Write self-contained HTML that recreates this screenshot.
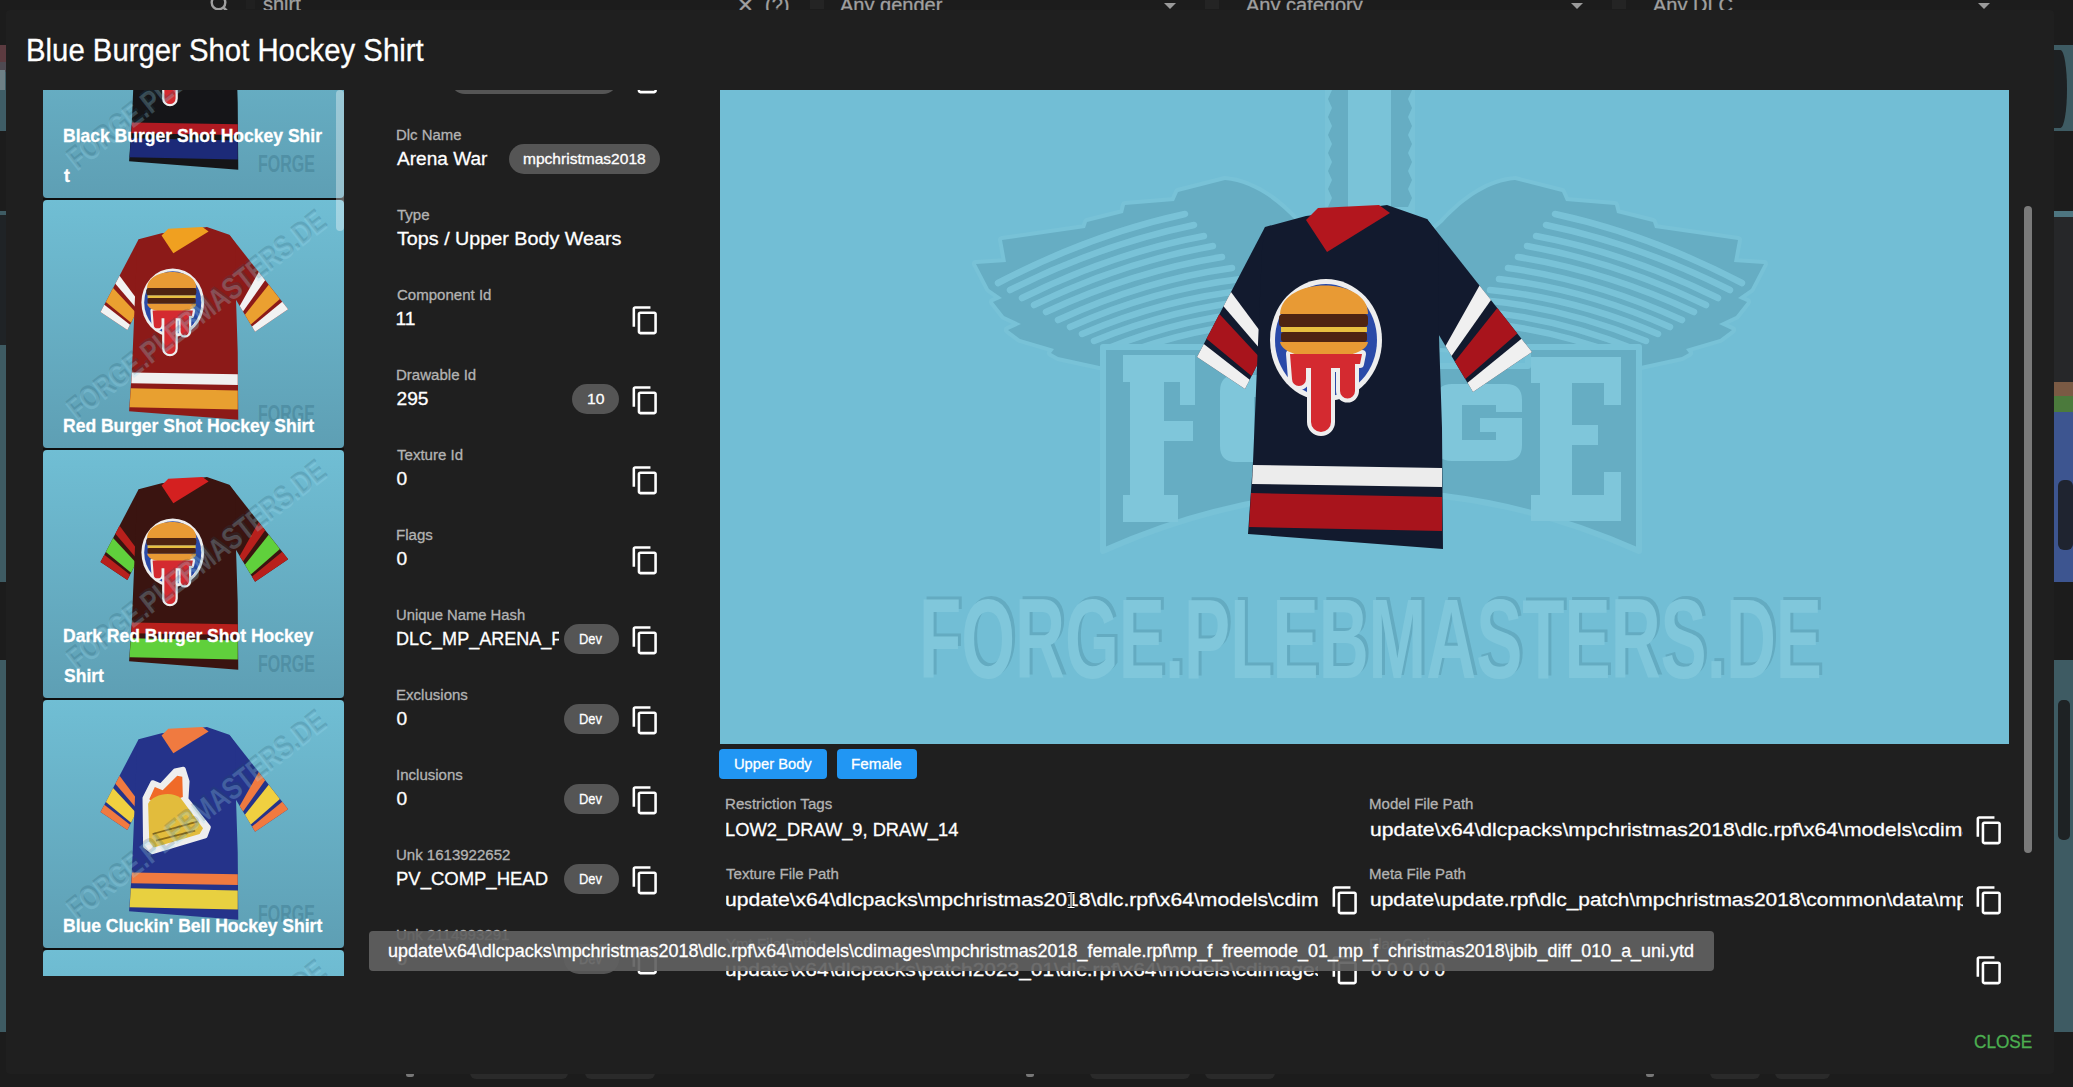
<!DOCTYPE html><html><head><meta charset="utf-8"><style>
*{margin:0;padding:0;box-sizing:border-box}
html,body{width:2073px;height:1087px;overflow:hidden;background:#1c1c1c;font-family:"Liberation Sans",sans-serif}
.t{position:absolute;line-height:1;white-space:nowrap;-webkit-text-stroke:0.3px currentColor}
.r{position:absolute}
.chip{position:absolute;text-align:center;white-space:nowrap}
.clip{position:absolute;overflow:hidden}
</style></head><body>
<div class="clip" style="left:0;top:0;width:2073px;height:1087px"><div class="r" style="left:0px;top:45px;width:6px;height:17px;background:#5c3b40;border-radius:0px;"></div>
<div class="r" style="left:0px;top:62px;width:6px;height:10px;background:#4e4a52;border-radius:0px;"></div>
<div class="r" style="left:0px;top:72px;width:6px;height:59px;background:#3f5d66;border-radius:0px;"></div>
<div class="r" style="left:0px;top:211px;width:6px;height:371px;background:#3e5b63;border-radius:0px;"></div>
<div class="r" style="left:0px;top:660px;width:6px;height:372px;background:#3e5b63;border-radius:0px;"></div>
<div class="r" style="left:0px;top:215px;width:6px;height:130px;background:#1f2326;border-radius:0px;"></div>
<div class="r" style="left:0px;top:70px;width:5px;height:20px;background:#6e8086;border-radius:0px;"></div>
<div class="r" style="left:2054px;top:45px;width:19px;height:86px;background:#3e5b63;border-radius:0px;"></div>
<div class="r" style="left:2054px;top:211px;width:19px;height:6px;background:#4d7580;border-radius:0px;"></div>
<div class="r" style="left:2054px;top:217px;width:19px;height:165px;background:#262729;border-radius:0px;"></div>
<div class="r" style="left:2054px;top:382px;width:19px;height:14px;background:#7a5a44;border-radius:0px;"></div>
<div class="r" style="left:2054px;top:396px;width:19px;height:16px;background:#4b7a3c;border-radius:0px;"></div>
<div class="r" style="left:2054px;top:412px;width:19px;height:170px;background:#3d5590;border-radius:0px;"></div>
<div class="r" style="left:2054px;top:660px;width:19px;height:372px;background:#3e5b63;border-radius:0px;"></div>
<div class="r" style="left:2054px;top:50px;width:13px;height:78px;background:#1d2022;border-radius:0px;border-radius:0 50% 50% 0/0 50% 50% 0"></div>
<div class="r" style="left:2058px;top:480px;width:15px;height:70px;background:#1f2430;border-radius:6px;"></div>
<div class="r" style="left:2058px;top:700px;width:12px;height:140px;background:#1e2224;border-radius:5px;"></div>
<div class="r" style="left:470px;top:1066px;width:98px;height:13px;background:#2a2a2a;border-radius:6px;"></div>
<div class="r" style="left:585px;top:1066px;width:70px;height:13px;background:#2a2a2a;border-radius:6px;"></div>
<div class="r" style="left:1090px;top:1066px;width:100px;height:13px;background:#2a2a2a;border-radius:6px;"></div>
<div class="r" style="left:1205px;top:1066px;width:70px;height:13px;background:#2a2a2a;border-radius:6px;"></div>
<div class="r" style="left:1710px;top:1066px;width:50px;height:13px;background:#2a2a2a;border-radius:6px;"></div>
<div class="r" style="left:1775px;top:1066px;width:55px;height:13px;background:#2a2a2a;border-radius:6px;"></div>
<div class="r" style="left:406px;top:1072px;width:8px;height:5px;background:#777;border-radius:3px;"></div>
<div class="r" style="left:1026px;top:1072px;width:8px;height:5px;background:#777;border-radius:3px;"></div>
<div class="r" style="left:1646px;top:1072px;width:8px;height:5px;background:#777;border-radius:3px;"></div>
<div class="r" style="left:810px;top:0px;width:14px;height:9px;background:#242424;border-radius:0px;"></div>
<div class="r" style="left:1205px;top:0px;width:14px;height:9px;background:#242424;border-radius:0px;"></div>
<div class="r" style="left:1612px;top:0px;width:14px;height:9px;background:#242424;border-radius:0px;"></div>
<div class="r" style="left:246px;top:0px;width:9px;height:9px;background:#202020;border-radius:0px;"></div>
<div class="clip" style="left:0;top:0;width:2073px;height:10px"><div class="t " style="left:263.00px;top:-5.93px;font-size:20px;color:#a0a0a0;">shirt</div>
<svg class="r" style="left:205px;top:-8px" width="30" height="30" viewBox="0 0 30 30"><circle cx="13.5" cy="10.5" r="6.8" stroke="#a0a0a0" stroke-width="2.4" fill="none"/><path d="M18.5,15.5 L24,21" stroke="#a0a0a0" stroke-width="2.6"/></svg><div class="t " style="left:737.00px;top:-4.93px;font-size:20px;color:#a0a0a0;">✕</div>
<div class="t " style="left:765.00px;top:-4.93px;font-size:20px;color:#a0a0a0;">(?)</div>
<div class="t " style="left:840.00px;top:-4.93px;font-size:20px;color:#a0a0a0;">Any gender</div>
<div class="t " style="left:1246.00px;top:-4.93px;font-size:20px;color:#a0a0a0;">Any category</div>
<div class="t " style="left:1653.00px;top:-4.93px;font-size:20px;color:#a0a0a0;">Any DLC</div>
<div class="r" style="left:1164px;top:3px;width:0;height:0;border-left:6px solid transparent;border-right:6px solid transparent;border-top:6px solid #9a9a9a"></div><div class="r" style="left:1571px;top:3px;width:0;height:0;border-left:6px solid transparent;border-right:6px solid transparent;border-top:6px solid #9a9a9a"></div><div class="r" style="left:1978px;top:3px;width:0;height:0;border-left:6px solid transparent;border-right:6px solid transparent;border-top:6px solid #9a9a9a"></div></div></div>
<div class="r" style="left:6px;top:10px;width:2048px;height:1064px;background:#1f1f1f;border-radius:4px;"></div>
<div class="t " style="left:26.08px;top:35.08px;font-size:30.5px;color:#fff;transform:scaleX(0.9613);transform-origin:0 0;">Blue Burger Shot Hockey Shirt</div>
<div class="clip" style="left:43px;top:90px;width:301px;height:886px"><div class="r" style="left:0px;top:107.5px;width:301px;height:2.5px;background:#0e0e0e;border-radius:0px;"></div>
<div class="r" style="left:0px;top:357.5px;width:301px;height:2.5px;background:#0e0e0e;border-radius:0px;"></div>
<div class="r" style="left:0px;top:607.5px;width:301px;height:2.5px;background:#0e0e0e;border-radius:0px;"></div>
<div class="r" style="left:0px;top:857.5px;width:301px;height:2.5px;background:#0e0e0e;border-radius:0px;"></div>
<div class="r" style="left:0;top:-140px;width:301px;height:247.5px;border-radius:4px;overflow:hidden;background:linear-gradient(#70bed4,#5e9fb4)"><svg class="r" style="left:0;top:0;width:301px;height:247px" viewBox="0 0 301 247"><g transform="translate(-612.8,-87.8) scale(0.56)"><path fill="#151518" d="M1265.0,227.0 L1197.0,357.0 L1245.0,389.0 L1292.0,296.0 Z"/><path fill="#151518" d="M1427.0,219.0 L1532.0,352.0 L1473.0,392.0 L1418.0,300.0 Z"/><path fill="#eee" d="M1231.0,292.0 L1223.5,306.3 L1263.3,352.7 L1268.5,342.5 Z"/><path fill="#a81820" d="M1219.4,314.1 L1206.5,338.8 L1251.6,376.0 L1260.5,358.3 Z"/><path fill="#eee" d="M1203.8,344.0 L1197.0,357.0 L1245.0,389.0 L1249.7,379.7 Z"/><path fill="#eee" d="M1479.5,285.5 L1491.0,300.1 L1451.5,356.1 L1445.5,346.0 Z"/><path fill="#a81820" d="M1497.3,308.1 L1517.3,333.4 L1465.3,379.1 L1454.8,361.6 Z"/><path fill="#eee" d="M1521.5,338.7 L1532.0,352.0 L1473.0,392.0 L1467.5,382.8 Z"/><path fill="#151518" d="M1306,216 L1387,205 L1427,219 L1438,234 L1439,336 L1442,428 L1443,549 L1248,534 L1253,462 L1257,367 L1262,250 L1265,227 Z"/><path fill="#c0202a" d="M1306,220 L1318,208 L1379,205 L1390,213 L1327,252 Z"/><path fill="#b01a22" d="M1253,465 L1442,468 L1442,487 L1252,484 Z"/><path fill="#1c2a78" d="M1251,493 L1442,497 L1442,531 L1249,527 Z"/><ellipse cx="1326" cy="340" rx="56" ry="61" fill="#eeeeee"/><ellipse cx="1326" cy="340" rx="51" ry="56" fill="#2a4aa8"/><path d="M1290,354 L1362,354 L1360,364 L1355,364 L1355,391 a7.5,7.5 0 0 1 -15,0 L1340,368 L1331,368 L1331,422 a10,10 0 0 1 -20,0 L1311,368 L1306,368 L1306,379 a7,7 0 0 1 -14,0 Z" fill="#eeeeee" stroke="#eeeeee" stroke-width="8" stroke-linejoin="round"/><path fill="#e89a34" d="M1280,314 C1282,276 1368,276 1368,314 Z"/><rect x="1279" y="314" width="89" height="13" rx="4" fill="#4e2412"/><rect x="1281" y="327" width="86" height="5" fill="#e8c040"/><rect x="1281" y="332" width="86" height="10" rx="3" fill="#4e2412"/><path fill="#e89a34" d="M1280,342 L1368,342 C1366,362 1284,364 1280,342 Z"/><path d="M1290,354 L1362,354 L1360,364 L1355,364 L1355,391 a7.5,7.5 0 0 1 -15,0 L1340,368 L1331,368 L1331,422 a10,10 0 0 1 -20,0 L1311,368 L1306,368 L1306,379 a7,7 0 0 1 -14,0 Z" fill="#d42a30"/></g><g transform="translate(34,222) rotate(-37.8)"><text x="2" y="-2" font-family="Liberation Sans" font-weight="bold" font-size="31" textLength="318" lengthAdjust="spacingAndGlyphs" fill="rgba(30,80,100,0.2)">FORGE.PLEBMASTERS.DE</text><text x="0" y="0" font-family="Liberation Sans" font-weight="bold" font-size="31" textLength="318" lengthAdjust="spacingAndGlyphs" fill="rgba(160,220,240,0.25)">FORGE.PLEBMASTERS.DE</text></g><text x="215" y="222" font-family="Liberation Sans" font-weight="bold" font-size="24" textLength="57" lengthAdjust="spacingAndGlyphs" fill="rgba(40,95,115,0.3)">FORGE</text></svg></div>
<div class="t " style="left:19.65px;top:37.32px;font-size:18.4px;color:#fff;transform:scaleX(0.9527);transform-origin:0 0;font-weight:bold;">Black Burger Shot Hockey Shir</div>
<div class="t " style="left:20.60px;top:77.32px;font-size:18.4px;color:#fff;transform:scaleX(0.9527);transform-origin:0 0;font-weight:bold;">t</div>
<div class="r" style="left:0;top:110px;width:301px;height:247.5px;border-radius:4px;overflow:hidden;background:linear-gradient(#70bed4,#5e9fb4)"><svg class="r" style="left:0;top:0;width:301px;height:247px" viewBox="0 0 301 247"><g transform="translate(-612.8,-87.8) scale(0.56)"><path fill="#8c1a18" d="M1265.0,227.0 L1197.0,357.0 L1245.0,389.0 L1292.0,296.0 Z"/><path fill="#8c1a18" d="M1427.0,219.0 L1532.0,352.0 L1473.0,392.0 L1418.0,300.0 Z"/><path fill="#f2f2f2" d="M1231.0,292.0 L1223.5,306.3 L1263.3,352.7 L1268.5,342.5 Z"/><path fill="#eba030" d="M1219.4,314.1 L1206.5,338.8 L1251.6,376.0 L1260.5,358.3 Z"/><path fill="#f2f2f2" d="M1203.8,344.0 L1197.0,357.0 L1245.0,389.0 L1249.7,379.7 Z"/><path fill="#f2f2f2" d="M1479.5,285.5 L1491.0,300.1 L1451.5,356.1 L1445.5,346.0 Z"/><path fill="#eba030" d="M1497.3,308.1 L1517.3,333.4 L1465.3,379.1 L1454.8,361.6 Z"/><path fill="#f2f2f2" d="M1521.5,338.7 L1532.0,352.0 L1473.0,392.0 L1467.5,382.8 Z"/><path fill="#8c1a18" d="M1306,216 L1387,205 L1427,219 L1438,234 L1439,336 L1442,428 L1443,549 L1248,534 L1253,462 L1257,367 L1262,250 L1265,227 Z"/><path fill="#f0a020" d="M1306,220 L1318,208 L1379,205 L1390,213 L1327,252 Z"/><path fill="#f0f0f0" d="M1253,465 L1442,468 L1442,487 L1252,484 Z"/><path fill="#e8a030" d="M1251,493 L1442,497 L1442,531 L1249,527 Z"/><ellipse cx="1326" cy="340" rx="56" ry="61" fill="#eeeeee"/><ellipse cx="1326" cy="340" rx="51" ry="56" fill="#2a4aa8"/><path d="M1290,354 L1362,354 L1360,364 L1355,364 L1355,391 a7.5,7.5 0 0 1 -15,0 L1340,368 L1331,368 L1331,422 a10,10 0 0 1 -20,0 L1311,368 L1306,368 L1306,379 a7,7 0 0 1 -14,0 Z" fill="#eeeeee" stroke="#eeeeee" stroke-width="8" stroke-linejoin="round"/><path fill="#e89a34" d="M1280,314 C1282,276 1368,276 1368,314 Z"/><rect x="1279" y="314" width="89" height="13" rx="4" fill="#4e2412"/><rect x="1281" y="327" width="86" height="5" fill="#e8c040"/><rect x="1281" y="332" width="86" height="10" rx="3" fill="#4e2412"/><path fill="#e89a34" d="M1280,342 L1368,342 C1366,362 1284,364 1280,342 Z"/><path d="M1290,354 L1362,354 L1360,364 L1355,364 L1355,391 a7.5,7.5 0 0 1 -15,0 L1340,368 L1331,368 L1331,422 a10,10 0 0 1 -20,0 L1311,368 L1306,368 L1306,379 a7,7 0 0 1 -14,0 Z" fill="#d42a30"/></g><g transform="translate(34,222) rotate(-37.8)"><text x="2" y="-2" font-family="Liberation Sans" font-weight="bold" font-size="31" textLength="318" lengthAdjust="spacingAndGlyphs" fill="rgba(30,80,100,0.2)">FORGE.PLEBMASTERS.DE</text><text x="0" y="0" font-family="Liberation Sans" font-weight="bold" font-size="31" textLength="318" lengthAdjust="spacingAndGlyphs" fill="rgba(160,220,240,0.25)">FORGE.PLEBMASTERS.DE</text></g><text x="215" y="222" font-family="Liberation Sans" font-weight="bold" font-size="24" textLength="57" lengthAdjust="spacingAndGlyphs" fill="rgba(40,95,115,0.3)">FORGE</text></svg></div>
<div class="t " style="left:19.65px;top:327.32px;font-size:18.4px;color:#fff;transform:scaleX(0.9527);transform-origin:0 0;font-weight:bold;">Red Burger Shot Hockey Shirt</div>
<div class="r" style="left:0;top:360px;width:301px;height:247.5px;border-radius:4px;overflow:hidden;background:linear-gradient(#70bed4,#5e9fb4)"><svg class="r" style="left:0;top:0;width:301px;height:247px" viewBox="0 0 301 247"><g transform="translate(-612.8,-87.8) scale(0.56)"><path fill="#3a1410" d="M1265.0,227.0 L1197.0,357.0 L1245.0,389.0 L1292.0,296.0 Z"/><path fill="#3a1410" d="M1427.0,219.0 L1532.0,352.0 L1473.0,392.0 L1418.0,300.0 Z"/><path fill="#b8201c" d="M1231.0,292.0 L1223.5,306.3 L1263.3,352.7 L1268.5,342.5 Z"/><path fill="#60d03c" d="M1219.4,314.1 L1206.5,338.8 L1251.6,376.0 L1260.5,358.3 Z"/><path fill="#b8201c" d="M1203.8,344.0 L1197.0,357.0 L1245.0,389.0 L1249.7,379.7 Z"/><path fill="#b8201c" d="M1479.5,285.5 L1491.0,300.1 L1451.5,356.1 L1445.5,346.0 Z"/><path fill="#60d03c" d="M1497.3,308.1 L1517.3,333.4 L1465.3,379.1 L1454.8,361.6 Z"/><path fill="#b8201c" d="M1521.5,338.7 L1532.0,352.0 L1473.0,392.0 L1467.5,382.8 Z"/><path fill="#3a1410" d="M1306,216 L1387,205 L1427,219 L1438,234 L1439,336 L1442,428 L1443,549 L1248,534 L1253,462 L1257,367 L1262,250 L1265,227 Z"/><path fill="#d42020" d="M1306,220 L1318,208 L1379,205 L1390,213 L1327,252 Z"/><path fill="#b8201c" d="M1253,465 L1442,468 L1442,487 L1252,484 Z"/><path fill="#60d03c" d="M1251,493 L1442,497 L1442,531 L1249,527 Z"/><ellipse cx="1326" cy="340" rx="56" ry="61" fill="#eeeeee"/><ellipse cx="1326" cy="340" rx="51" ry="56" fill="#2a4aa8"/><path d="M1290,354 L1362,354 L1360,364 L1355,364 L1355,391 a7.5,7.5 0 0 1 -15,0 L1340,368 L1331,368 L1331,422 a10,10 0 0 1 -20,0 L1311,368 L1306,368 L1306,379 a7,7 0 0 1 -14,0 Z" fill="#eeeeee" stroke="#eeeeee" stroke-width="8" stroke-linejoin="round"/><path fill="#e89a34" d="M1280,314 C1282,276 1368,276 1368,314 Z"/><rect x="1279" y="314" width="89" height="13" rx="4" fill="#4e2412"/><rect x="1281" y="327" width="86" height="5" fill="#e8c040"/><rect x="1281" y="332" width="86" height="10" rx="3" fill="#4e2412"/><path fill="#e89a34" d="M1280,342 L1368,342 C1366,362 1284,364 1280,342 Z"/><path d="M1290,354 L1362,354 L1360,364 L1355,364 L1355,391 a7.5,7.5 0 0 1 -15,0 L1340,368 L1331,368 L1331,422 a10,10 0 0 1 -20,0 L1311,368 L1306,368 L1306,379 a7,7 0 0 1 -14,0 Z" fill="#d42a30"/></g><g transform="translate(34,222) rotate(-37.8)"><text x="2" y="-2" font-family="Liberation Sans" font-weight="bold" font-size="31" textLength="318" lengthAdjust="spacingAndGlyphs" fill="rgba(30,80,100,0.2)">FORGE.PLEBMASTERS.DE</text><text x="0" y="0" font-family="Liberation Sans" font-weight="bold" font-size="31" textLength="318" lengthAdjust="spacingAndGlyphs" fill="rgba(160,220,240,0.25)">FORGE.PLEBMASTERS.DE</text></g><text x="215" y="222" font-family="Liberation Sans" font-weight="bold" font-size="24" textLength="57" lengthAdjust="spacingAndGlyphs" fill="rgba(40,95,115,0.3)">FORGE</text></svg></div>
<div class="t " style="left:19.65px;top:537.32px;font-size:18.4px;color:#fff;transform:scaleX(0.9527);transform-origin:0 0;font-weight:bold;">Dark Red Burger Shot Hockey</div>
<div class="t " style="left:20.60px;top:577.32px;font-size:18.4px;color:#fff;transform:scaleX(0.9527);transform-origin:0 0;font-weight:bold;">Shirt</div>
<div class="r" style="left:0;top:610px;width:301px;height:247.5px;border-radius:4px;overflow:hidden;background:linear-gradient(#70bed4,#5e9fb4)"><svg class="r" style="left:0;top:0;width:301px;height:247px" viewBox="0 0 301 247"><g transform="translate(-612.8,-87.8) scale(0.56)"><path fill="#25338a" d="M1265.0,227.0 L1197.0,357.0 L1245.0,389.0 L1292.0,296.0 Z"/><path fill="#25338a" d="M1427.0,219.0 L1532.0,352.0 L1473.0,392.0 L1418.0,300.0 Z"/><path fill="#f07a40" d="M1231.0,292.0 L1223.5,306.3 L1263.3,352.7 L1268.5,342.5 Z"/><path fill="#f0d040" d="M1219.4,314.1 L1206.5,338.8 L1251.6,376.0 L1260.5,358.3 Z"/><path fill="#f07a40" d="M1203.8,344.0 L1197.0,357.0 L1245.0,389.0 L1249.7,379.7 Z"/><path fill="#f07a40" d="M1479.5,285.5 L1491.0,300.1 L1451.5,356.1 L1445.5,346.0 Z"/><path fill="#f0d040" d="M1497.3,308.1 L1517.3,333.4 L1465.3,379.1 L1454.8,361.6 Z"/><path fill="#f07a40" d="M1521.5,338.7 L1532.0,352.0 L1473.0,392.0 L1467.5,382.8 Z"/><path fill="#25338a" d="M1306,216 L1387,205 L1427,219 L1438,234 L1439,336 L1442,428 L1443,549 L1248,534 L1253,462 L1257,367 L1262,250 L1265,227 Z"/><path fill="#f07a40" d="M1306,220 L1318,208 L1379,205 L1390,213 L1327,252 Z"/><path fill="#f07a40" d="M1253,465 L1442,468 L1442,487 L1252,484 Z"/><path fill="#e8d040" d="M1251,493 L1442,497 L1442,531 L1249,527 Z"/><path fill="#eeeeee" stroke="#eeeeee" stroke-width="8" stroke-linejoin="round" d="M1276,332 L1290,304 L1305,310 L1330,283 L1345,280 L1352,302 L1350,334 L1390,384 L1384,400 L1290,428 L1277,418 Z"/><path fill="#f06a28" d="M1284,334 L1294,312 L1308,318 L1334,292 L1343,294 L1344,330 L1300,346 Z"/><path fill="#e2bc3c" d="M1282,342 C1290,326 1322,318 1340,332 L1380,386 L1374,396 L1292,420 L1284,410 Z"/><path fill="none" stroke="#8a6a18" stroke-width="3" d="M1290,396 L1370,374 M1296,408 L1366,390"/></g><g transform="translate(34,222) rotate(-37.8)"><text x="2" y="-2" font-family="Liberation Sans" font-weight="bold" font-size="31" textLength="318" lengthAdjust="spacingAndGlyphs" fill="rgba(30,80,100,0.2)">FORGE.PLEBMASTERS.DE</text><text x="0" y="0" font-family="Liberation Sans" font-weight="bold" font-size="31" textLength="318" lengthAdjust="spacingAndGlyphs" fill="rgba(160,220,240,0.25)">FORGE.PLEBMASTERS.DE</text></g><text x="215" y="222" font-family="Liberation Sans" font-weight="bold" font-size="24" textLength="57" lengthAdjust="spacingAndGlyphs" fill="rgba(40,95,115,0.3)">FORGE</text></svg></div>
<div class="t " style="left:19.65px;top:827.32px;font-size:18.4px;color:#fff;transform:scaleX(0.9527);transform-origin:0 0;font-weight:bold;">Blue Cluckin' Bell Hockey Shirt</div>
<div class="r" style="left:0;top:860px;width:301px;height:247.5px;border-radius:4px;overflow:hidden;background:linear-gradient(#70bed4,#5e9fb4)"><svg class="r" style="left:0;top:0;width:301px;height:247px" viewBox="0 0 301 247"><g transform="translate(-612.8,-87.8) scale(0.56)"><path fill="#25338a" d="M1265.0,227.0 L1197.0,357.0 L1245.0,389.0 L1292.0,296.0 Z"/><path fill="#25338a" d="M1427.0,219.0 L1532.0,352.0 L1473.0,392.0 L1418.0,300.0 Z"/><path fill="#f07a40" d="M1231.0,292.0 L1223.5,306.3 L1263.3,352.7 L1268.5,342.5 Z"/><path fill="#f0d040" d="M1219.4,314.1 L1206.5,338.8 L1251.6,376.0 L1260.5,358.3 Z"/><path fill="#f07a40" d="M1203.8,344.0 L1197.0,357.0 L1245.0,389.0 L1249.7,379.7 Z"/><path fill="#f07a40" d="M1479.5,285.5 L1491.0,300.1 L1451.5,356.1 L1445.5,346.0 Z"/><path fill="#f0d040" d="M1497.3,308.1 L1517.3,333.4 L1465.3,379.1 L1454.8,361.6 Z"/><path fill="#f07a40" d="M1521.5,338.7 L1532.0,352.0 L1473.0,392.0 L1467.5,382.8 Z"/><path fill="#25338a" d="M1306,216 L1387,205 L1427,219 L1438,234 L1439,336 L1442,428 L1443,549 L1248,534 L1253,462 L1257,367 L1262,250 L1265,227 Z"/><path fill="#f07a40" d="M1306,220 L1318,208 L1379,205 L1390,213 L1327,252 Z"/><path fill="#f07a40" d="M1253,465 L1442,468 L1442,487 L1252,484 Z"/><path fill="#e8d040" d="M1251,493 L1442,497 L1442,531 L1249,527 Z"/><ellipse cx="1326" cy="340" rx="56" ry="61" fill="#eeeeee"/><ellipse cx="1326" cy="340" rx="51" ry="56" fill="#25338a"/><path d="M1290,354 L1362,354 L1360,364 L1355,364 L1355,391 a7.5,7.5 0 0 1 -15,0 L1340,368 L1331,368 L1331,422 a10,10 0 0 1 -20,0 L1311,368 L1306,368 L1306,379 a7,7 0 0 1 -14,0 Z" fill="#eeeeee" stroke="#eeeeee" stroke-width="8" stroke-linejoin="round"/><path fill="#f0d040" d="M1280,314 C1282,276 1368,276 1368,314 Z"/><rect x="1279" y="314" width="89" height="13" rx="4" fill="#4e2412"/><rect x="1281" y="327" width="86" height="5" fill="#e8c040"/><rect x="1281" y="332" width="86" height="10" rx="3" fill="#4e2412"/><path fill="#f0d040" d="M1280,342 L1368,342 C1366,362 1284,364 1280,342 Z"/><path d="M1290,354 L1362,354 L1360,364 L1355,364 L1355,391 a7.5,7.5 0 0 1 -15,0 L1340,368 L1331,368 L1331,422 a10,10 0 0 1 -20,0 L1311,368 L1306,368 L1306,379 a7,7 0 0 1 -14,0 Z" fill="#d42a30"/></g><g transform="translate(34,222) rotate(-37.8)"><text x="2" y="-2" font-family="Liberation Sans" font-weight="bold" font-size="31" textLength="318" lengthAdjust="spacingAndGlyphs" fill="rgba(30,80,100,0.2)">FORGE.PLEBMASTERS.DE</text><text x="0" y="0" font-family="Liberation Sans" font-weight="bold" font-size="31" textLength="318" lengthAdjust="spacingAndGlyphs" fill="rgba(160,220,240,0.25)">FORGE.PLEBMASTERS.DE</text></g><text x="215" y="222" font-family="Liberation Sans" font-weight="bold" font-size="24" textLength="57" lengthAdjust="spacingAndGlyphs" fill="rgba(40,95,115,0.3)">FORGE</text></svg></div>
<div class="r" style="left:293px;top:0px;width:8px;height:141px;background:rgba(255,255,255,0.35);border-radius:4px;"></div>
</div>
<div class="clip" style="left:360px;top:90px;width:340px;height:886px"><div class="r" style="left:90px;top:-46px;width:168px;height:50px;background:#555;border-radius:15px;"></div>
<svg class="r" style="left:270px;top:-26px;width:30.7px;height:30.7px;" viewBox="0 0 24 24"><path fill="#fff" d="M16 1H4c-1.1 0-2 .9-2 2v14h2V3h12V1zm3 4H8c-1.1 0-2 .9-2 2v14c0 1.1.9 2 2 2h11c1.1 0 2-.9 2-2V7c0-1.1-.9-2-2-2zm0 16H8V7h11v14z"/></svg>
<div class="t " style="left:35.52px;top:36.53px;font-size:15.2px;color:#b3b3b3;transform:scaleX(0.9813);transform-origin:0 0;">Dlc Name</div>
<div class="t " style="left:36.50px;top:59.35px;font-size:19.2px;color:#fff;transform:scaleX(0.9934);transform-origin:0 0;">Arena War</div>
<div class="r" style="left:149px;top:54px;width:151px;height:30px;background:#555;border-radius:15px"></div><div class="t " style="left:162.66px;top:61.00px;font-size:15px;color:#fff;transform:scaleX(1.0364);transform-origin:0 0;">mpchristmas2018</div>
<div class="t " style="left:36.50px;top:116.53px;font-size:15.2px;color:#b3b3b3;transform:scaleX(0.9900);transform-origin:0 0;">Type</div>
<div class="t " style="left:36.50px;top:139.35px;font-size:19.2px;color:#fff;transform:scaleX(1.0282);transform-origin:0 0;">Tops / Upper Body Wears</div>
<div class="t " style="left:36.50px;top:196.53px;font-size:15.2px;color:#b3b3b3;transform:scaleX(0.9900);transform-origin:0 0;">Component Id</div>
<div class="t " style="left:35.50px;top:219.35px;font-size:19.2px;color:#fff;transform:scaleX(1.0000);transform-origin:0 0;">11</div>
<svg class="r" style="left:270px;top:214.5px;width:30.7px;height:30.7px;" viewBox="0 0 24 24"><path fill="#fff" d="M16 1H4c-1.1 0-2 .9-2 2v14h2V3h12V1zm3 4H8c-1.1 0-2 .9-2 2v14c0 1.1.9 2 2 2h11c1.1 0 2-.9 2-2V7c0-1.1-.9-2-2-2zm0 16H8V7h11v14z"/></svg>
<div class="t " style="left:35.51px;top:276.53px;font-size:15.2px;color:#b3b3b3;transform:scaleX(0.9900);transform-origin:0 0;">Drawable Id</div>
<div class="t " style="left:36.50px;top:299.35px;font-size:19.2px;color:#fff;transform:scaleX(1.0000);transform-origin:0 0;">295</div>
<div class="r" style="left:212px;top:294px;width:47px;height:30px;background:#555;border-radius:15px"></div><div class="t " style="left:226.95px;top:301.00px;font-size:15px;color:#fff;transform:scaleX(1.0494);transform-origin:0 0;">10</div>
<svg class="r" style="left:270px;top:294.5px;width:30.7px;height:30.7px;" viewBox="0 0 24 24"><path fill="#fff" d="M16 1H4c-1.1 0-2 .9-2 2v14h2V3h12V1zm3 4H8c-1.1 0-2 .9-2 2v14c0 1.1.9 2 2 2h11c1.1 0 2-.9 2-2V7c0-1.1-.9-2-2-2zm0 16H8V7h11v14z"/></svg>
<div class="t " style="left:36.50px;top:356.53px;font-size:15.2px;color:#b3b3b3;transform:scaleX(0.9900);transform-origin:0 0;">Texture Id</div>
<div class="t " style="left:36.50px;top:379.35px;font-size:19.2px;color:#fff;transform:scaleX(1.0000);transform-origin:0 0;">0</div>
<svg class="r" style="left:270px;top:374.5px;width:30.7px;height:30.7px;" viewBox="0 0 24 24"><path fill="#fff" d="M16 1H4c-1.1 0-2 .9-2 2v14h2V3h12V1zm3 4H8c-1.1 0-2 .9-2 2v14c0 1.1.9 2 2 2h11c1.1 0 2-.9 2-2V7c0-1.1-.9-2-2-2zm0 16H8V7h11v14z"/></svg>
<div class="t " style="left:35.51px;top:436.53px;font-size:15.2px;color:#b3b3b3;transform:scaleX(0.9900);transform-origin:0 0;">Flags</div>
<div class="t " style="left:36.50px;top:459.35px;font-size:19.2px;color:#fff;transform:scaleX(1.0000);transform-origin:0 0;">0</div>
<svg class="r" style="left:270px;top:454.5px;width:30.7px;height:30.7px;" viewBox="0 0 24 24"><path fill="#fff" d="M16 1H4c-1.1 0-2 .9-2 2v14h2V3h12V1zm3 4H8c-1.1 0-2 .9-2 2v14c0 1.1.9 2 2 2h11c1.1 0 2-.9 2-2V7c0-1.1-.9-2-2-2zm0 16H8V7h11v14z"/></svg>
<div class="t " style="left:35.53px;top:516.53px;font-size:15.2px;color:#b3b3b3;transform:scaleX(0.9742);transform-origin:0 0;">Unique Name Hash</div>
<div class="clip" style="left:36px;top:525.6px;width:162.9px;height:40px"><div class="t " style="left:-0.44px;top:13.75px;font-size:19.2px;color:#fff;transform:scaleX(0.9400);transform-origin:0 0;">DLC_MP_ARENA_F</div>
</div><div class="r" style="left:204px;top:534px;width:55px;height:30px;background:#555;border-radius:15px"></div><div class="t " style="left:219.04px;top:541.00px;font-size:15px;color:#fff;transform:scaleX(0.8596);transform-origin:0 0;">Dev</div>
<svg class="r" style="left:270px;top:534.5px;width:30.7px;height:30.7px;" viewBox="0 0 24 24"><path fill="#fff" d="M16 1H4c-1.1 0-2 .9-2 2v14h2V3h12V1zm3 4H8c-1.1 0-2 .9-2 2v14c0 1.1.9 2 2 2h11c1.1 0 2-.9 2-2V7c0-1.1-.9-2-2-2zm0 16H8V7h11v14z"/></svg>
<div class="t " style="left:35.51px;top:596.53px;font-size:15.2px;color:#b3b3b3;transform:scaleX(0.9900);transform-origin:0 0;">Exclusions</div>
<div class="t " style="left:36.50px;top:619.35px;font-size:19.2px;color:#fff;transform:scaleX(1.0000);transform-origin:0 0;">0</div>
<div class="r" style="left:204px;top:614px;width:55px;height:30px;background:#555;border-radius:15px"></div><div class="t " style="left:219.04px;top:621.00px;font-size:15px;color:#fff;transform:scaleX(0.8596);transform-origin:0 0;">Dev</div>
<svg class="r" style="left:270px;top:614.5px;width:30.7px;height:30.7px;" viewBox="0 0 24 24"><path fill="#fff" d="M16 1H4c-1.1 0-2 .9-2 2v14h2V3h12V1zm3 4H8c-1.1 0-2 .9-2 2v14c0 1.1.9 2 2 2h11c1.1 0 2-.9 2-2V7c0-1.1-.9-2-2-2zm0 16H8V7h11v14z"/></svg>
<div class="t " style="left:35.51px;top:676.53px;font-size:15.2px;color:#b3b3b3;transform:scaleX(0.9900);transform-origin:0 0;">Inclusions</div>
<div class="t " style="left:36.50px;top:699.35px;font-size:19.2px;color:#fff;transform:scaleX(1.0000);transform-origin:0 0;">0</div>
<div class="r" style="left:204px;top:694px;width:55px;height:30px;background:#555;border-radius:15px"></div><div class="t " style="left:219.04px;top:701.00px;font-size:15px;color:#fff;transform:scaleX(0.8596);transform-origin:0 0;">Dev</div>
<svg class="r" style="left:270px;top:694.5px;width:30.7px;height:30.7px;" viewBox="0 0 24 24"><path fill="#fff" d="M16 1H4c-1.1 0-2 .9-2 2v14h2V3h12V1zm3 4H8c-1.1 0-2 .9-2 2v14c0 1.1.9 2 2 2h11c1.1 0 2-.9 2-2V7c0-1.1-.9-2-2-2zm0 16H8V7h11v14z"/></svg>
<div class="t " style="left:35.51px;top:756.53px;font-size:15.2px;color:#b3b3b3;transform:scaleX(0.9882);transform-origin:0 0;">Unk 1613922652</div>
<div class="t " style="left:35.54px;top:779.35px;font-size:19.2px;color:#fff;transform:scaleX(0.9631);transform-origin:0 0;">PV_COMP_HEAD</div>
<div class="r" style="left:204px;top:774px;width:55px;height:30px;background:#555;border-radius:15px"></div><div class="t " style="left:219.04px;top:781.00px;font-size:15px;color:#fff;transform:scaleX(0.8596);transform-origin:0 0;">Dev</div>
<svg class="r" style="left:270px;top:774.5px;width:30.7px;height:30.7px;" viewBox="0 0 24 24"><path fill="#fff" d="M16 1H4c-1.1 0-2 .9-2 2v14h2V3h12V1zm3 4H8c-1.1 0-2 .9-2 2v14c0 1.1.9 2 2 2h11c1.1 0 2-.9 2-2V7c0-1.1-.9-2-2-2zm0 16H8V7h11v14z"/></svg>
<div class="t " style="left:35.51px;top:836.53px;font-size:15.2px;color:#b3b3b3;transform:scaleX(0.9900);transform-origin:0 0;">Unk 2114993291</div>
<div class="t " style="left:36.50px;top:859.35px;font-size:19.2px;color:#fff;transform:scaleX(1.0000);transform-origin:0 0;">0</div>
<div class="r" style="left:204px;top:854px;width:55px;height:30px;background:#555;border-radius:15px"></div><div class="t " style="left:219.04px;top:861.00px;font-size:15px;color:#fff;transform:scaleX(0.8596);transform-origin:0 0;">Dev</div>
<svg class="r" style="left:270px;top:854.5px;width:30.7px;height:30.7px;" viewBox="0 0 24 24"><path fill="#fff" d="M16 1H4c-1.1 0-2 .9-2 2v14h2V3h12V1zm3 4H8c-1.1 0-2 .9-2 2v14c0 1.1.9 2 2 2h11c1.1 0 2-.9 2-2V7c0-1.1-.9-2-2-2zm0 16H8V7h11v14z"/></svg>
</div>
<div class="r" style="left:720px;top:90px;width:1289px;height:654px;overflow:hidden;background:#72bed5"><svg class="r" style="left:0;top:0" width="1289" height="654" viewBox="720 90 1289 654"><rect x="1325" y="90" width="90" height="130" fill="#78c2d7"/><path fill="#66adc3" d="M1332,90 L1332,90 L1328,99 L1332,108 L1328,117 L1332,126 L1328,135 L1332,144 L1328,153 L1332,162 L1328,171 L1332,180 L1328,189 L1332,198 L1328,207 L1408,207 L1408,207 L1412,198 L1408,189 L1412,180 L1408,171 L1412,162 L1408,153 L1412,144 L1408,135 L1412,126 L1408,117 L1412,108 L1408,99 L1412,90 Z"/><rect x="1348" y="90" width="43" height="120" fill="#7ac3d8"/><g><path d="M1420,242 L1443,222 C1465,198 1490,182 1515,180 L1562,192 L1566,201 L1615,205 L1617,213 L1653,222 L1655,228 L1738,240 L1734,262 L1764,264 L1751,289 L1738,298 L1747,302 L1736,316 L1719,324 L1732,330 L1720,339 L1686,349 L1689,353 L1682,357 L1636,367 L1625,362 L1530,354 L1440,348 Z" fill="#66adc3" stroke="#78c2d7" stroke-width="8" stroke-linejoin="round"/><path d="M1420,242 L1443,222 C1465,198 1490,182 1515,180 L1562,192 L1566,201 L1615,205 L1617,213 L1653,222 L1655,228 L1738,240 L1734,262 L1764,264 L1751,289 L1738,298 L1747,302 L1736,316 L1719,324 L1732,330 L1720,339 L1686,349 L1689,353 L1682,357 L1636,367 L1625,362 L1530,354 L1440,348 Z" fill="#66adc3"/></g><g transform="translate(2740,0) scale(-1,1)"><path d="M1420,242 L1443,222 C1465,198 1490,182 1515,180 L1562,192 L1566,201 L1615,205 L1617,213 L1653,222 L1655,228 L1738,240 L1734,262 L1764,264 L1751,289 L1738,298 L1747,302 L1736,316 L1719,324 L1732,330 L1720,339 L1686,349 L1689,353 L1682,357 L1636,367 L1625,362 L1530,354 L1440,348 Z" fill="#66adc3" stroke="#78c2d7" stroke-width="8" stroke-linejoin="round"/><path d="M1420,242 L1443,222 C1465,198 1490,182 1515,180 L1562,192 L1566,201 L1615,205 L1617,213 L1653,222 L1655,228 L1738,240 L1734,262 L1764,264 L1751,289 L1738,298 L1747,302 L1736,316 L1719,324 L1732,330 L1720,339 L1686,349 L1689,353 L1682,357 L1636,367 L1625,362 L1530,354 L1440,348 Z" fill="#66adc3"/></g><g opacity="0.9"><path d="M1555,214 Q1648,234 1742,283" stroke="#7cc5da" stroke-width="6.5" fill="none" stroke-linecap="round"/><path d="M1546,225 Q1638,244 1730,290" stroke="#7cc5da" stroke-width="6.5" fill="none" stroke-linecap="round"/><path d="M1536,236 Q1627,253 1718,298" stroke="#7cc5da" stroke-width="6.5" fill="none" stroke-linecap="round"/><path d="M1527,246 Q1617,262 1706,305" stroke="#7cc5da" stroke-width="6.5" fill="none" stroke-linecap="round"/><path d="M1518,257 Q1606,271 1694,312" stroke="#7cc5da" stroke-width="6.5" fill="none" stroke-linecap="round"/><path d="M1508,268 Q1595,280 1682,320" stroke="#7cc5da" stroke-width="6.5" fill="none" stroke-linecap="round"/><path d="M1499,279 Q1585,289 1670,327" stroke="#7cc5da" stroke-width="6.5" fill="none" stroke-linecap="round"/><path d="M1490,290 Q1574,298 1658,334" stroke="#7cc5da" stroke-width="6.5" fill="none" stroke-linecap="round"/><path d="M1481,300 Q1563,307 1646,341" stroke="#7cc5da" stroke-width="6.5" fill="none" stroke-linecap="round"/><path d="M1471,311 Q1553,316 1634,349" stroke="#7cc5da" stroke-width="6.5" fill="none" stroke-linecap="round"/><path d="M1462,322 Q1542,325 1622,356" stroke="#7cc5da" stroke-width="6.5" fill="none" stroke-linecap="round"/></g><g transform="translate(2740,0) scale(-1,1)" opacity="0.9"><path d="M1555,214 Q1648,234 1742,283" stroke="#7cc5da" stroke-width="6.5" fill="none" stroke-linecap="round"/><path d="M1546,225 Q1638,244 1730,290" stroke="#7cc5da" stroke-width="6.5" fill="none" stroke-linecap="round"/><path d="M1536,236 Q1627,253 1718,298" stroke="#7cc5da" stroke-width="6.5" fill="none" stroke-linecap="round"/><path d="M1527,246 Q1617,262 1706,305" stroke="#7cc5da" stroke-width="6.5" fill="none" stroke-linecap="round"/><path d="M1518,257 Q1606,271 1694,312" stroke="#7cc5da" stroke-width="6.5" fill="none" stroke-linecap="round"/><path d="M1508,268 Q1595,280 1682,320" stroke="#7cc5da" stroke-width="6.5" fill="none" stroke-linecap="round"/><path d="M1499,279 Q1585,289 1670,327" stroke="#7cc5da" stroke-width="6.5" fill="none" stroke-linecap="round"/><path d="M1490,290 Q1574,298 1658,334" stroke="#7cc5da" stroke-width="6.5" fill="none" stroke-linecap="round"/><path d="M1481,300 Q1563,307 1646,341" stroke="#7cc5da" stroke-width="6.5" fill="none" stroke-linecap="round"/><path d="M1471,311 Q1553,316 1634,349" stroke="#7cc5da" stroke-width="6.5" fill="none" stroke-linecap="round"/><path d="M1462,322 Q1542,325 1622,356" stroke="#7cc5da" stroke-width="6.5" fill="none" stroke-linecap="round"/></g><path fill="#66adc3" stroke="#78c2d7" stroke-width="6" stroke-linejoin="round" d="M1103,347 L1218,347 L1218,366 L1528,366 L1528,347 L1639,347 L1639,551 Q1370,432 1103,551 Z"/><path fill="#7fc6da" d="M1123,355 L1195,355 L1195,405 L1180,405 L1180,382 L1164,382 L1164,421 L1193,421 L1193,441 L1164,441 L1164,495 L1178,495 L1178,522 L1123,522 L1123,495 L1130,495 L1130,382 L1123,382 Z"/><path fill="#7fc6da" fill-rule="evenodd" d="M1236,375 L1303,375 Q1319,375 1319,391 L1319,446 Q1319,462 1303,462 L1236,462 Q1220,462 1220,446 L1220,391 Q1220,375 1236,375 Z M1254,397 L1285,397 L1285,440 L1254,440 Z"/><path fill="#7fc6da" fill-rule="evenodd" d="M1452,384 L1506,384 Q1522,384 1522,400 L1522,412 L1496,412 L1496,405 L1462,405 L1462,440 L1496,440 L1496,432 L1480,432 L1480,418 L1522,418 L1522,445 Q1522,461 1506,461 L1452,461 Q1436,461 1436,445 L1436,400 Q1436,384 1452,384 Z"/><path fill="#7fc6da" d="M1531,357 L1621,357 L1621,405 L1604,405 L1604,383 L1572,383 L1572,425 L1598,425 L1598,445 L1572,445 L1572,495 L1604,495 L1604,472 L1621,472 L1621,521 L1531,521 L1531,495 L1540,495 L1540,383 L1531,383 Z"/><g transform="translate(922,675) scale(1,1.2)"><text x="0" y="0" font-family="Liberation Sans" font-weight="bold" font-size="94" textLength="903" lengthAdjust="spacingAndGlyphs" fill="#64abc1">FORGE.PLEBMASTERS.DE</text></g><g transform="translate(919,678) scale(1,1.2)"><text x="0" y="0" font-family="Liberation Sans" font-weight="bold" font-size="94" textLength="903" lengthAdjust="spacingAndGlyphs" fill="#80c7db">FORGE.PLEBMASTERS.DE</text></g><path fill="#121a2e" d="M1265.0,227.0 L1197.0,357.0 L1245.0,389.0 L1292.0,296.0 Z"/><path fill="#121a2e" d="M1427.0,219.0 L1532.0,352.0 L1473.0,392.0 L1418.0,300.0 Z"/><path fill="#f0f0f0" d="M1231.0,292.0 L1223.5,306.3 L1263.3,352.7 L1268.5,342.5 Z"/><path fill="#a8141c" d="M1219.4,314.1 L1206.5,338.8 L1251.6,376.0 L1260.5,358.3 Z"/><path fill="#f0f0f0" d="M1203.8,344.0 L1197.0,357.0 L1245.0,389.0 L1249.7,379.7 Z"/><path fill="#f0f0f0" d="M1479.5,285.5 L1491.0,300.1 L1451.5,356.1 L1445.5,346.0 Z"/><path fill="#a8141c" d="M1497.3,308.1 L1517.3,333.4 L1465.3,379.1 L1454.8,361.6 Z"/><path fill="#f0f0f0" d="M1521.5,338.7 L1532.0,352.0 L1473.0,392.0 L1467.5,382.8 Z"/><path fill="#121a2e" d="M1306,216 L1387,205 L1427,219 L1438,234 L1439,336 L1442,428 L1443,549 L1248,534 L1253,462 L1257,367 L1262,250 L1265,227 Z"/><path fill="#b3161e" d="M1306,220 L1318,208 L1379,205 L1390,213 L1327,252 Z"/><path fill="#ececec" d="M1253,465 L1442,468 L1442,487 L1252,484 Z"/><path fill="#a8141c" d="M1251,493 L1442,497 L1442,531 L1249,527 Z"/><ellipse cx="1326" cy="340" rx="56" ry="61" fill="#eeeeee"/><ellipse cx="1326" cy="340" rx="51" ry="56" fill="#2a4aa8"/><path d="M1290,354 L1362,354 L1360,364 L1355,364 L1355,391 a7.5,7.5 0 0 1 -15,0 L1340,368 L1331,368 L1331,422 a10,10 0 0 1 -20,0 L1311,368 L1306,368 L1306,379 a7,7 0 0 1 -14,0 Z" fill="#eeeeee" stroke="#eeeeee" stroke-width="8" stroke-linejoin="round"/><path fill="#e89a34" d="M1280,314 C1282,276 1368,276 1368,314 Z"/><rect x="1279" y="314" width="89" height="13" rx="4" fill="#4e2412"/><rect x="1281" y="327" width="86" height="5" fill="#e8c040"/><rect x="1281" y="332" width="86" height="10" rx="3" fill="#4e2412"/><path fill="#e89a34" d="M1280,342 L1368,342 C1366,362 1284,364 1280,342 Z"/><path d="M1290,354 L1362,354 L1360,364 L1355,364 L1355,391 a7.5,7.5 0 0 1 -15,0 L1340,368 L1331,368 L1331,422 a10,10 0 0 1 -20,0 L1311,368 L1306,368 L1306,379 a7,7 0 0 1 -14,0 Z" fill="#d42a30"/></svg></div>
<div class="r" style="left:719px;top:749px;width:108px;height:30px;background:#2196f3;border-radius:4px;"></div>
<div class="t " style="left:733.53px;top:756.23px;font-size:15.2px;color:#fff;transform:scaleX(0.9685);transform-origin:0 0;">Upper Body</div>
<div class="r" style="left:837px;top:749px;width:80px;height:30px;background:#2196f3;border-radius:4px;"></div>
<div class="t " style="left:851.40px;top:756.23px;font-size:15.2px;color:#fff;transform:scaleX(1.0001);transform-origin:0 0;">Female</div>
<div class="t " style="left:724.70px;top:796.13px;font-size:15.2px;color:#b3b3b3;transform:scaleX(0.9959);transform-origin:0 0;">Restriction Tags</div>
<div class="clip" style="left:725.7px;top:810.9px;width:574.3px;height:34px"><div class="t " style="left:-0.35px;top:8.75px;font-size:19.2px;color:#fff;transform:scaleX(0.9529);transform-origin:0 0;">LOW2_DRAW_9, DRAW_14</div>
</div><div class="t " style="left:725.70px;top:866.13px;font-size:15.2px;color:#b3b3b3;transform:scaleX(0.9900);transform-origin:0 0;">Texture File Path</div>
<div class="clip" style="left:725.7px;top:880.9px;width:592.3px;height:34px"><div class="t " style="left:-0.50px;top:8.75px;font-size:19.2px;color:#fff;transform:scaleX(1.1020);transform-origin:0 0;">update\x64\dlcpacks\mpchristmas2018\dlc.rpf\x64\models\cdimages\mpchristmas2018_female.rpf</div>
</div><svg class="r" style="left:1330px;top:884.6px;width:30.7px;height:30.7px;" viewBox="0 0 24 24"><path fill="#fff" d="M16 1H4c-1.1 0-2 .9-2 2v14h2V3h12V1zm3 4H8c-1.1 0-2 .9-2 2v14c0 1.1.9 2 2 2h11c1.1 0 2-.9 2-2V7c0-1.1-.9-2-2-2zm0 16H8V7h11v14z"/></svg>
<div class="t " style="left:725.70px;top:936.13px;font-size:15.2px;color:#b3b3b3;transform:scaleX(0.9900);transform-origin:0 0;">Ymt File Path</div>
<div class="clip" style="left:725.7px;top:950.9px;width:592.3px;height:34px"><div class="t " style="left:-0.49px;top:8.75px;font-size:19.2px;color:#fff;transform:scaleX(1.0901);transform-origin:0 0;">update\x64\dlcpacks\patch2023_01\dlc.rpf\x64\models\cdimages\patch2023_01.rpf</div>
</div><svg class="r" style="left:1330px;top:954.6px;width:30.7px;height:30.7px;" viewBox="0 0 24 24"><path fill="#fff" d="M16 1H4c-1.1 0-2 .9-2 2v14h2V3h12V1zm3 4H8c-1.1 0-2 .9-2 2v14c0 1.1.9 2 2 2h11c1.1 0 2-.9 2-2V7c0-1.1-.9-2-2-2zm0 16H8V7h11v14z"/></svg>
<div class="t " style="left:1369.21px;top:796.13px;font-size:15.2px;color:#b3b3b3;transform:scaleX(0.9900);transform-origin:0 0;">Model File Path</div>
<div class="clip" style="left:1370.2px;top:810.9px;width:592.8px;height:34px"><div class="t " style="left:-0.50px;top:8.75px;font-size:19.2px;color:#fff;transform:scaleX(1.0999);transform-origin:0 0;">update\x64\dlcpacks\mpchristmas2018\dlc.rpf\x64\models\cdimages\mpchristmas2018_female.rpf</div>
</div><svg class="r" style="left:1974px;top:814.6px;width:30.7px;height:30.7px;" viewBox="0 0 24 24"><path fill="#fff" d="M16 1H4c-1.1 0-2 .9-2 2v14h2V3h12V1zm3 4H8c-1.1 0-2 .9-2 2v14c0 1.1.9 2 2 2h11c1.1 0 2-.9 2-2V7c0-1.1-.9-2-2-2zm0 16H8V7h11v14z"/></svg>
<div class="t " style="left:1369.21px;top:866.13px;font-size:15.2px;color:#b3b3b3;transform:scaleX(0.9900);transform-origin:0 0;">Meta File Path</div>
<div class="clip" style="left:1370.2px;top:880.9px;width:592.8px;height:34px"><div class="t " style="left:-0.49px;top:8.75px;font-size:19.2px;color:#fff;transform:scaleX(1.0908);transform-origin:0 0;">update\update.rpf\dlc_patch\mpchristmas2018\common\data\mp_f_freemode_01_mp_f_christmas2018.meta</div>
</div><svg class="r" style="left:1974px;top:884.6px;width:30.7px;height:30.7px;" viewBox="0 0 24 24"><path fill="#fff" d="M16 1H4c-1.1 0-2 .9-2 2v14h2V3h12V1zm3 4H8c-1.1 0-2 .9-2 2v14c0 1.1.9 2 2 2h11c1.1 0 2-.9 2-2V7c0-1.1-.9-2-2-2zm0 16H8V7h11v14z"/></svg>
<div class="t " style="left:1369.21px;top:936.13px;font-size:15.2px;color:#b3b3b3;transform:scaleX(0.9900);transform-origin:0 0;">Flag Options</div>
<div class="clip" style="left:1370.2px;top:950.9px;width:592.8px;height:34px"><div class="t " style="left:0.60px;top:8.75px;font-size:19.2px;color:#fff;transform:scaleX(0.9931);transform-origin:0 0;">0 0 0 0 0</div>
</div><svg class="r" style="left:1974px;top:954.6px;width:30.7px;height:30.7px;" viewBox="0 0 24 24"><path fill="#fff" d="M16 1H4c-1.1 0-2 .9-2 2v14h2V3h12V1zm3 4H8c-1.1 0-2 .9-2 2v14c0 1.1.9 2 2 2h11c1.1 0 2-.9 2-2V7c0-1.1-.9-2-2-2zm0 16H8V7h11v14z"/></svg>
<div class="r" style="left:2024px;top:206px;width:8px;height:647px;background:#7a7a7a;border-radius:4px;"></div>
<svg class="r" style="left:1064px;top:889px" width="14" height="22" viewBox="0 0 14 22"><path d="M3.5,3.5 H10.5 M7,3.5 V18.5 M3.5,18.5 H10.5" stroke="#111" stroke-width="3" fill="none"/><path d="M3.5,3.5 H10.5 M7,3.5 V18.5 M3.5,18.5 H10.5" stroke="#fff" stroke-width="1.2" fill="none"/></svg><div class="t " style="left:1973.90px;top:1032.66px;font-size:18px;color:#4caf50;transform:scaleX(0.9555);transform-origin:0 0;">CLOSE</div>
<div class="r" style="left:369px;top:931px;width:1345px;height:40px;background:rgba(97,97,97,0.92);border-radius:4px"></div><div class="t " style="left:388.47px;top:942.79px;font-size:17.5px;color:#fff;transform:scaleX(1.0259);transform-origin:0 0;">update\x64\dlcpacks\mpchristmas2018\dlc.rpf\x64\models\cdimages\mpchristmas2018_female.rpf\mp_f_freemode_01_mp_f_christmas2018\jbib_diff_010_a_uni.ytd</div>

<!--BODY-->
</body></html>
